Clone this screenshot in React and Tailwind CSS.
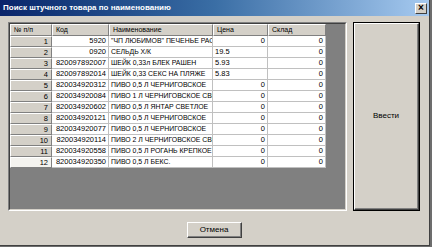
const rows = [
  { n: 1, code: '5920', name: '"ЧП ЛЮБИМОВ" ПЕЧЕНЬЕ РАССЫПЧАТОЕ', price: '0', stock: '0' },
  { n: 2, code: '0920', name: 'СЕЛЬДЬ Х/К', price: '19.5', stock: '0' },
  { n: 3, code: '820097892007', name: 'ШЕЙК 0,33л БЛЕК РАШЕН', price: '5.93', stock: '0' },
  { n: 4, code: '820097892014', name: 'ШЕЙК 0,33 СЕКС НА ПЛЯЖЕ', price: '5.83', stock: '0' },
  { n: 5, code: '820034920312', name: 'ПИВО 0,5 Л ЧЕРНИГОВСКОЕ', price: '0', stock: '0' },
  { n: 6, code: '820034920084', name: 'ПИВО 1 Л ЧЕРНИГОВСКОЕ СВЕТЛОЕ', price: '0', stock: '0' },
  { n: 7, code: '820034920602', name: 'ПИВО 0,5 Л ЯНТАР СВЕТЛОЕ', price: '0', stock: '0' },
  { n: 8, code: '820034920121', name: 'ПИВО 0,5 Л ЧЕРНИГОВСКОЕ', price: '0', stock: '0' },
  { n: 9, code: '820034920077', name: 'ПИВО 0,5 Л ЧЕРНИГОВСКОЕ', price: '0', stock: '0' },
  { n: 10, code: '820034920114', name: 'ПИВО 2 Л ЧЕРНИГОВСКОЕ СВЕТЛОЕ', price: '0', stock: '0' },
  { n: 11, code: '820034920558', name: 'ПИВО 0,5 Л РОГАНЬ КРЕПКОЕ', price: '0', stock: '0' },
  { n: 12, code: '820034920350', name: 'ПИВО 0,5 Л БЕКС.', price: '0', stock: '0' },
]

const HeadCell = ({ w, children }) => (
  <div className={`${w} h-[12px] shrink-0 bg-[#d4d0c8] border-t border-l border-t-white border-l-white border-r border-b border-r-[#808080] border-b-[#808080] pl-[3px] leading-[10px] overflow-hidden whitespace-nowrap`}>
    {children}
  </div>
)

const Cell = ({ w, align = 'text-right', size = 'text-[7.5px]', children }) => (
  <div className={`${w} h-[11px] shrink-0 bg-white border-r border-b border-[#c0c0c0] px-[2px] leading-[10px] overflow-hidden whitespace-nowrap ${align} ${size}`}>
    {children}
  </div>
)

export default function App() {
  return (
    <div className="w-[432px] h-[247px] bg-[#6d6d6d] overflow-hidden">
      <div className="w-[430px] h-[246px] bg-[#d4d0c8] border-r border-b border-[#404040] flex flex-col font-['Liberation_Sans',Arial,sans-serif] text-black">
        {/* title bar */}
        <div className="h-[16px] shrink-0 flex items-center justify-between pl-[3px] pr-[2px] bg-gradient-to-r from-[#0a246a] via-[#3a6ea5] to-[#a6caf0]">
          <span className="text-white font-bold text-[8px] whitespace-nowrap">Поиск штучного товара по наименованию</span>
          <div className="w-[12px] h-[11px] bg-[#d4d0c8] border-t border-l border-white border-r border-b border-r-[#404040] border-b-[#404040] flex items-center justify-center text-[10px] font-bold leading-none">
            ×
          </div>
        </div>

        <div className="flex-1 flex flex-col pl-[8px] pt-[6px] text-[7.5px]">
          <div className="flex gap-[6px] h-[189px]">
            {/* grid frame */}
            <div className="w-[339px] border-t border-l border-[#808080] border-r border-b border-r-white border-b-white">
              <div className="w-full h-full border-t border-l border-[#404040] border-r border-b border-r-[#d4d0c8] border-b-[#d4d0c8] bg-[#808080] overflow-hidden">
                <div className="flex text-[7px]">
                  <HeadCell w="w-[42px]">№ п/п</HeadCell>
                  <HeadCell w="w-[57px]">Код</HeadCell>
                  <HeadCell w="w-[104px]">Наименование</HeadCell>
                  <HeadCell w="w-[55px]">Цена</HeadCell>
                  <HeadCell w="w-[58px]">Склад</HeadCell>
                </div>
                {rows.map((r) => (
                  <div key={r.n} className="flex">
                    <div className={`w-[42px] h-[11px] shrink-0 ${r.n === 12 ? 'bg-[#f4f3ef]' : 'bg-[#d4d0c8]'} border-t border-l border-white border-r border-b border-r-[#808080] border-b-[#808080] pr-[3px] text-right leading-[9px]`}>
                      {r.n}
                    </div>
                    <Cell w="w-[57px]">{r.code}</Cell>
                    <Cell w="w-[104px]" align="text-left" size="text-[6.9px]">{r.name}</Cell>
                    <Cell w="w-[55px]" align={r.price === '0' ? 'text-right' : 'text-left'}>{r.price}</Cell>
                    <Cell w="w-[58px]">{r.stock}</Cell>
                  </div>
                ))}
              </div>
            </div>

            {/* Ввести button */}
            <div className="w-[67px] border border-black">
              <div className="w-full h-full border-t border-l border-white border-r border-b border-r-[#404040] border-b-[#404040]">
                <div className="w-full h-full border-r border-b border-[#808080] flex items-center justify-center text-[8px]">
                  Ввести
                </div>
              </div>
            </div>
          </div>

          <div className="pl-[179px] pt-[11px]">
            <div className="w-[55px] h-[16px] border-t border-l border-white border-r border-b border-r-[#404040] border-b-[#404040]">
              <div className="w-full h-full border-r border-b border-[#808080] flex items-center justify-center text-[8px]">
                Отмена
              </div>
            </div>
          </div>
        </div>
      </div>
    </div>
  )
}
